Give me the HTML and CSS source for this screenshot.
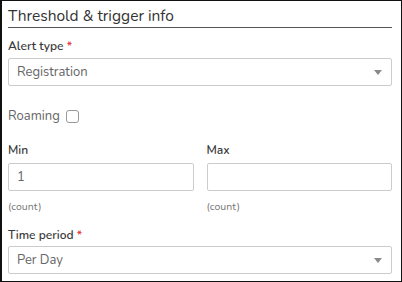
FILE: index.html
```html
<!DOCTYPE html>
<html>
<head>
<meta charset="utf-8">
<link rel="stylesheet" href="styles.css">
</head>
<body>
<div class="panel">
  <h2 class="title">Threshold &amp; trigger info</h2>
  <div class="field first">
    <label class="label">Alert type <span class="req">*</span></label>
    <div class="select"><span class="value">Registration</span><span class="caret"></span></div>
  </div>
  <div class="roaming">
    <span class="roam-label">Roaming</span><span class="checkbox"></span>
  </div>
  <div class="row">
    <div class="col">
      <label class="label">Min</label>
      <div class="input"><span class="value">1</span></div>
      <div class="hint">(count)</div>
    </div>
    <div class="col">
      <label class="label">Max</label>
      <div class="input"></div>
      <div class="hint">(count)</div>
    </div>
  </div>
  <div class="field period">
    <label class="label">Time period <span class="req">*</span></label>
    <div class="select"><span class="value">Per Day</span><span class="caret"></span></div>
  </div>
</div>
</body>
</html>
```
FILE: styles.css
```css
* { box-sizing: border-box; }
html, body { margin: 0; padding: 0; background: #fff; }
body { font-family: "Nunito", Lato, "Open Sans", sans-serif; }
.panel {
  width: 402px;
  height: 282px;
  border: 1px solid #111;
  border-left-width: 2px;
  padding: 0 9px 0 6px;
  display: flex;
  flex-direction: column;
}
.title {
  margin: 5px 0 0 0;
  font-size: 15.5px;
  line-height: 20px;
  font-weight: 400;
  color: #333;
  padding-bottom: 1px;
  border-bottom: 1px solid #555;
}
.field.first { margin-top: 10px; }
.label {
  display: block;
  font-size: 12px;
  line-height: 16px;
  font-weight: 600;
  color: #3a3a3a;
}
.req { color: #e0393e; }
.select, .input {
  height: 28px;
  border: 1px solid #ccc;
  border-radius: 2px;
  display: flex;
  align-items: center;
  padding: 0 9px 0 8px;
  margin-top: 4px;
}
.value { font-size: 13px; color: #666; flex: 1; }
.caret {
  width: 0; height: 0;
  border-left: 4px solid transparent;
  border-right: 4px solid transparent;
  border-top: 5px solid #8a8a8a;
}
.roaming {
  margin-top: 22px;
  display: flex;
  align-items: center;
  height: 16px;
}
.roam-label { font-size: 13px; color: #666; }
.checkbox {
  width: 13px; height: 13px;
  border: 1px solid #999;
  border-radius: 3px;
  margin-left: 6px;
}
.row {
  margin-top: 18px;
  display: grid;
  grid-template-columns: 1fr 1fr;
  column-gap: 13px;
}
.input { margin-top: 5px; }
.hint {
  margin-top: 10px;
  font-size: 10.5px;
  line-height: 12px;
  color: #777;
}
.period { margin-top: 14px; }
.period .select { margin-top: 3px; }
```
